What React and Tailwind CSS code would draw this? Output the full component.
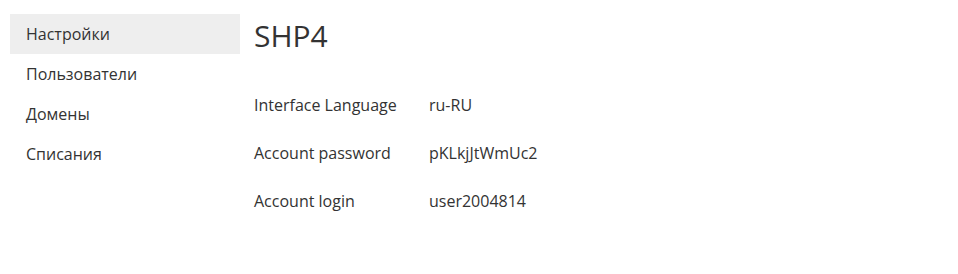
export default function App() {
  const nav = ["Настройки", "Пользователи", "Домены", "Списания"];
  const rows = [
    ["Interface Language", "ru-RU"],
    ["Account password", "pKLkjJtWmUc2"],
    ["Account login", "user2004814"],
  ];
  return (
    <div className="flex pt-[14px] pl-[10px] bg-white text-[#333333] min-h-[274px]" style={{ fontFamily: '"Open Sans", sans-serif' }}>
      <div className="w-[230px] flex flex-col">
        {nav.map((n, i) => (
          <div key={n} className={`h-[40px] flex items-center pl-[16px] text-[16px] ${i === 0 ? "bg-[#eeeeee]" : ""}`}>
            {n}
          </div>
        ))}
      </div>
      <div className="pl-[14px]">
        <h1 className="text-[30px] leading-[44px]">SHP4</h1>
        <div className="mt-[23px] flex flex-col">
          {rows.map(([k, v]) => (
            <div key={k} className="flex h-[48px] items-center text-[16px]">
              <div className="w-[175px]">{k}</div>
              <div>{v}</div>
            </div>
          ))}
        </div>
      </div>
    </div>
  );
}
